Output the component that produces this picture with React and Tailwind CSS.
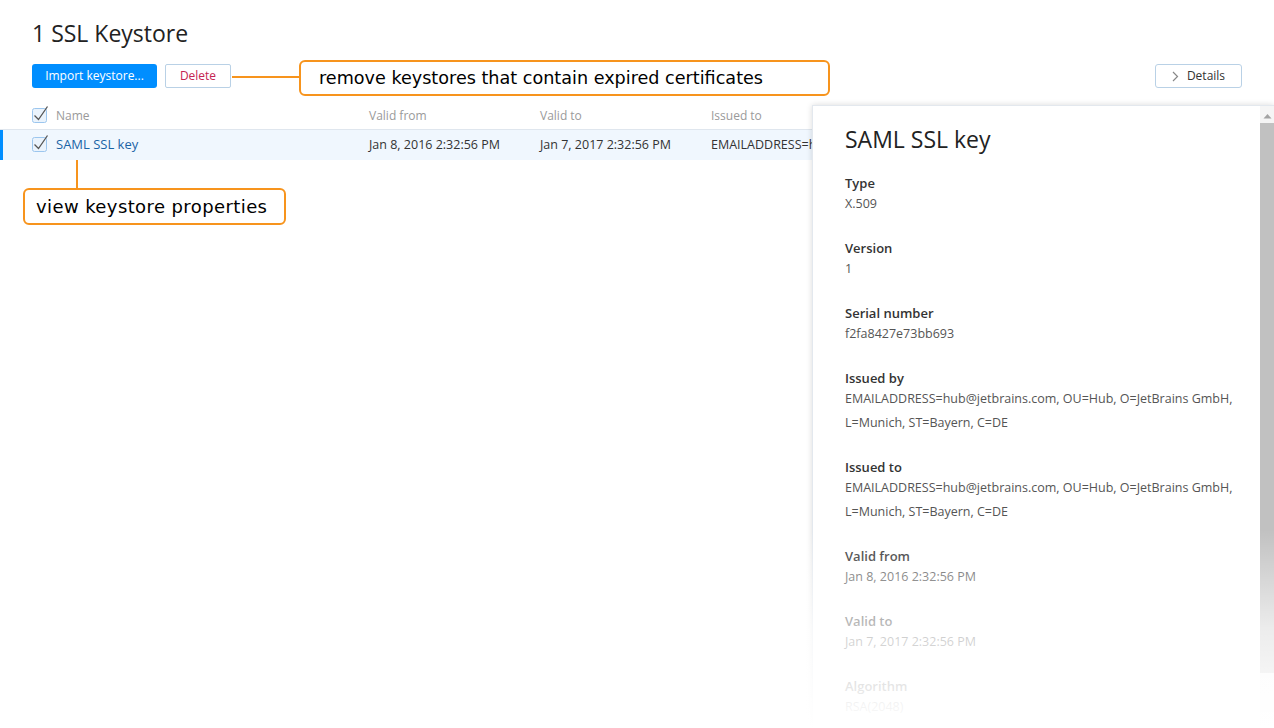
import React from "react";

const F = { fontFamily: '"Open Sans", "Noto Sans", sans-serif' };

function Check() {
  return (
    <svg width="18" height="18" viewBox="0 0 18 18" className="block">
      <rect x="0.5" y="3.5" width="14" height="14" rx="2" fill="#eaf3fc" stroke="#9cc6ee" />
      <path d="M2.5 10.5 L6.5 14.5 L15.5 1.5" fill="none" stroke="#555" strokeWidth="1.3" />
    </svg>
  );
}

const sections = [
  { l: "Type", v: ["X.509"] },
  { l: "Version", v: ["1"] },
  { l: "Serial number", v: ["f2fa8427e73bb693"] },
  { l: "Issued by", v: ["EMAILADDRESS=hub@jetbrains.com, OU=Hub, O=JetBrains GmbH,", "L=Munich, ST=Bayern, C=DE"] },
  { l: "Issued to", v: ["EMAILADDRESS=hub@jetbrains.com, OU=Hub, O=JetBrains GmbH,", "L=Munich, ST=Bayern, C=DE"] },
  { l: "Valid from", v: ["Jan 8, 2016 2:32:56 PM"] },
  { l: "Valid to", v: ["Jan 7, 2017 2:32:56 PM"] },
  { l: "Algorithm", v: ["RSA(2048)"] },
];

export default function App() {
  return (
    <div className="relative w-[1274px] h-[728px] overflow-hidden bg-white text-[#333]" style={F}>
      <div className="flex flex-col pt-[17px]">
        <h1 className="pl-[32px] text-[23px] leading-[32px] text-[#222]">1 SSL Keystore</h1>
        <div className="flex items-center mt-[15px] pl-[32px] pr-[32px]">
          <button className="h-[24px] w-[125px] rounded-[3px] bg-[#008eff] text-white text-[12px]">Import keystore...</button>
          <button className="ml-[8px] h-[24px] w-[66px] rounded-[2px] border border-[#b9d1e6] text-[#c42452] text-[12px]">Delete</button>
          <div className="flex-1" />
          <button className="h-[24px] w-[87px] rounded-[3px] border border-[#b9d1e6] text-[#333] text-[12px] flex items-center justify-center gap-[8px]">
            <svg width="7" height="11" viewBox="0 0 7 11"><path d="M1 1 L5.5 5.5 L1 10" fill="none" stroke="#888" strokeWidth="1.2" /></svg>
            <span>Details</span>
          </button>
        </div>
        <div className="mt-[14px] grid grid-cols-[24px_313px_171px_171px_101px] items-center h-[28px] pl-[32px] border-b border-[#dfe6ee] text-[12px] text-[#9a9a9a]">
          <div className="-mt-[4px]"><Check /></div>
          <div>Name</div>
          <div>Valid from</div>
          <div>Valid to</div>
          <div className="overflow-hidden whitespace-nowrap">Issued to</div>
        </div>
        <div className="grid grid-cols-[24px_313px_171px_171px_101px] items-center h-[30px] bg-[#f0f7fe] border-l-[3px] border-[#008eff] pl-[29px] text-[12.5px]">
          <div className="-mt-[4px]"><Check /></div>
          <div className="text-[#1b64a6] text-[13px]">SAML SSL key</div>
          <div>Jan 8, 2016 2:32:56 PM</div>
          <div>Jan 7, 2017 2:32:56 PM</div>
          <div className="overflow-hidden whitespace-nowrap">EMAILADDRESS=h</div>
        </div>
      </div>

      {/* callouts */}
      <div className="absolute left-[232px] top-[76px] w-[68px] h-[2px] bg-[#f7941d]" />
      <div className="absolute left-[299px] top-[60px] w-[531px] h-[36px] rounded-[6px] border-2 border-[#f7941d] bg-white flex items-center pl-[18px] text-[17.6px] text-black" style={{ fontFamily: '"DejaVu Sans", sans-serif' }}>
        remove keystores that contain expired certificates
      </div>
      <div className="absolute left-[76px] top-[160px] w-[2px] h-[29px] bg-[#f7941d]" />
      <div className="absolute left-[23px] top-[188px] w-[263px] h-[37px] rounded-[6px] border-2 border-[#f7941d] bg-white flex items-center pl-[11px] text-[18px] tracking-[0.4px] text-black" style={{ fontFamily: '"DejaVu Sans", sans-serif' }}>
        view keystore properties
      </div>

      {/* details panel */}
      <div className="absolute left-[812px] top-[105px] w-[462px] h-[700px] bg-white shadow-[0_0_6px_rgba(0,0,0,0.15)] border-t border-l border-[#e3e8ee] flex">
        <div className="flex-1 pl-[32px] pt-[17px]">
          <div className="text-[23px] leading-[32px] text-[#222]">SAML SSL key</div>
          <div className="mt-[18px] flex flex-col gap-[22px]">
            {sections.map((s) => (
              <div key={s.l} className="flex flex-col">
                <div className="text-[13px] leading-[20px] font-semibold text-[#333]">{s.l}</div>
                <div className="-mt-[1px] text-[12.5px] leading-[24px] text-[#555]">
                  {s.v.map((x) => (
                    <div key={x}>{x}</div>
                  ))}
                </div>
              </div>
            ))}
          </div>
        </div>
        <div className="w-[14px] flex flex-col items-center bg-[#f5f5f5]">
          <svg width="9" height="6" viewBox="0 0 9 6" className="mt-[7px]"><path d="M0.5 5.5 L4.5 1 L8.5 5.5 Z" fill="#a3a3a3" /></svg>
          <div className="mt-[4px] w-full h-[550px] bg-[#c1c1c1]" />
        </div>
      </div>
      <div className="absolute left-[805px] top-[530px] w-[469px] h-[198px] bg-gradient-to-b from-white/0 via-white/70 to-white" />
    </div>
  );
}
